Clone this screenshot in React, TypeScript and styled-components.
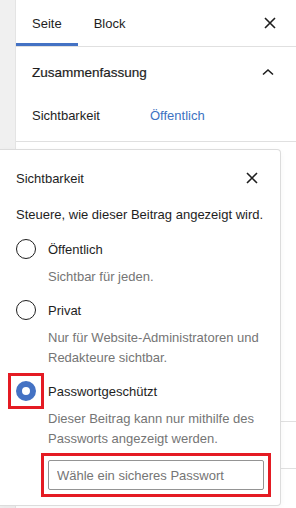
import React from "react";
import styled, { createGlobalStyle } from "styled-components";

const GlobalStyle = createGlobalStyle`
  html, body {
    margin: 0;
    padding: 0;
    background: #fff;
  }
  body {
    font-family: "Liberation Sans", Arial, sans-serif;
    font-size: 13px;
    color: #1e1e1e;
  }
  * {
    box-sizing: border-box;
  }
`;

const Page = styled.div`
  position: relative;
  display: flex;
  width: 296px;
  height: 508px;
  overflow: hidden;
`;

const Gutter = styled.div`
  width: 16px;
  flex: none;
  background: #f0f0f0;
  border-right: 1px solid #e4e4e4;
`;

const Sidebar = styled.aside`
  flex: 1;
  display: flex;
  flex-direction: column;
  background: #fff;
`;

const TabBar = styled.div`
  display: flex;
  align-items: stretch;
  flex: none;
  height: 47px;
  border-bottom: 1px solid #e0e0e0;
  padding-right: 14px;
`;

const Tab = styled.button<{ $active?: boolean }>`
  border: 0;
  background: none;
  font: inherit;
  color: #1e1e1e;
  padding: 0 16px;
  height: 46px;
  cursor: pointer;
  box-shadow: ${(p) => (p.$active ? "inset 0 -3px 0 #4472c4" : "none")};
`;

const Spacer = styled.div`
  flex: 1;
`;

const IconButton = styled.button`
  width: 24px;
  height: 24px;
  padding: 0;
  border: 0;
  background: none;
  display: flex;
  align-items: center;
  justify-content: center;
  align-self: center;
  color: #1e1e1e;
  cursor: pointer;
`;

const Panel = styled.section<{ $height?: number }>`
  padding: 0 16px;
  border-bottom: 1px solid #e0e0e0;
  height: ${(p) => (p.$height ? `${p.$height}px` : "auto")};
  flex: none;
`;

const PanelTitle = styled.div`
  display: flex;
  align-items: center;
  justify-content: space-between;
  height: 50px;
  font-size: 13.5px;
  font-weight: 500;
  -webkit-text-stroke: 0.2px #1e1e1e;
`;

const Row = styled.div`
  display: flex;
  align-items: center;
  height: 44px;
  padding-bottom: 8px;
`;

const RowLabel = styled.span`
  width: 118px;
`;

const LinkValue = styled.span`
  color: #3d72c2;
`;

const Popover = styled.div`
  position: absolute;
  left: 0;
  top: 149px;
  width: 281px;
  height: 357px;
  background: #fff;
  border: 1px solid #dcdcdc;
  border-left: 0;
  border-radius: 0 4px 4px 0;
  box-shadow: 0 2px 6px rgba(0, 0, 0, 0.04);
  padding: 4px 16px 0 16px;
  display: flex;
  flex-direction: column;
  & > * {
    flex: none;
  }
`;

const PopoverHeader = styled.div`
  display: flex;
  align-items: center;
  justify-content: space-between;
  height: 48px;
  font-weight: 500;
`;

const Description = styled.p`
  margin: 3px 0 1px;
  line-height: 20px;
  white-space: nowrap;
`;

const Option = styled.label`
  display: block;
  margin-top: 13px;
`;

const OptionRow = styled.span`
  display: flex;
  align-items: center;
  gap: 12px;
  height: 20px;
`;

const RadioFrame = styled.span<{ $marked?: boolean }>`
  display: block;
  width: 20px;
  height: 20px;
  flex: none;
  outline: ${(p) => (p.$marked ? "3px solid #e41b23" : "none")};
  outline-offset: 5px;
`;

const Radio = styled.span<{ $checked?: boolean }>`
  display: block;
  width: 20px;
  height: 20px;
  border-radius: 50%;
  border: ${(p) => (p.$checked ? "6px solid #4472c4" : "1.5px solid #1e1e1e")};
  background: #fff;
`;

const Help = styled.span`
  display: block;
  margin: 8px 0 0 32px;
  color: #757575;
  line-height: 20px;
  white-space: nowrap;
`;

const InputFrame = styled.div`
  margin: 11px 0 0 32px;
  width: 216px;
  outline: 3px solid #e41b23;
  outline-offset: 4px;
`;

const PasswordInput = styled.input`
  display: block;
  width: 100%;
  height: 30px;
  border: 1px solid #949494;
  border-radius: 2px;
  padding: 0 8px;
  font: inherit;
  color: #1e1e1e;
  outline: none;
  &::placeholder {
    color: #757575;
  }
`;

const CloseIcon = () => (
  <svg width="24" height="24" viewBox="0 0 24 24" fill="none">
    <path d="M7 7l10 10M17 7L7 17" stroke="currentColor" strokeWidth="1.6" />
  </svg>
);

const ChevronUp = () => (
  <svg width="24" height="24" viewBox="0 0 24 24" fill="none">
    <path d="M7 14.5l5-4.5 5 4.5" stroke="currentColor" strokeWidth="1.6" />
  </svg>
);

const options = [
  { label: "Öffentlich", help: ["Sichtbar für jeden."] },
  {
    label: "Privat",
    help: ["Nur für Website-Administratoren und", "Redakteure sichtbar."],
  },
  {
    label: "Passwortgeschützt",
    help: ["Dieser Beitrag kann nur mithilfe des", "Passworts angezeigt werden."],
    checked: true,
  },
];

export default function App() {
  return (
    <Page>
      <GlobalStyle />
      <Gutter />
      <Sidebar>
        <TabBar>
          <Tab $active>Seite</Tab>
          <Tab>Block</Tab>
          <Spacer />
          <IconButton aria-label="Schließen">
            <CloseIcon />
          </IconButton>
        </TabBar>
        <Panel>
          <PanelTitle>
            Zusammenfassung
            <IconButton aria-label="Einklappen">
              <ChevronUp />
            </IconButton>
          </PanelTitle>
          <Row>
            <RowLabel>Sichtbarkeit</RowLabel>
            <LinkValue>Öffentlich</LinkValue>
          </Row>
        </Panel>
        <Panel $height={280} />
        <Panel $height={47} />
      </Sidebar>

      <Popover>
        <PopoverHeader>
          Sichtbarkeit
          <IconButton aria-label="Schließen">
            <CloseIcon />
          </IconButton>
        </PopoverHeader>
        <Description>Steuere, wie dieser Beitrag angezeigt wird.</Description>
        {options.map((o) => (
          <Option key={o.label}>
            <OptionRow>
              <RadioFrame $marked={o.checked}>
                <Radio $checked={o.checked} />
              </RadioFrame>
              {o.label}
            </OptionRow>
            <Help>
              {o.help.map((line) => (
                <React.Fragment key={line}>
                  {line}
                  <br />
                </React.Fragment>
              ))}
            </Help>
          </Option>
        ))}
        <InputFrame>
          <PasswordInput placeholder="Wähle ein sicheres Passwort" />
        </InputFrame>
      </Popover>
    </Page>
  );
}
